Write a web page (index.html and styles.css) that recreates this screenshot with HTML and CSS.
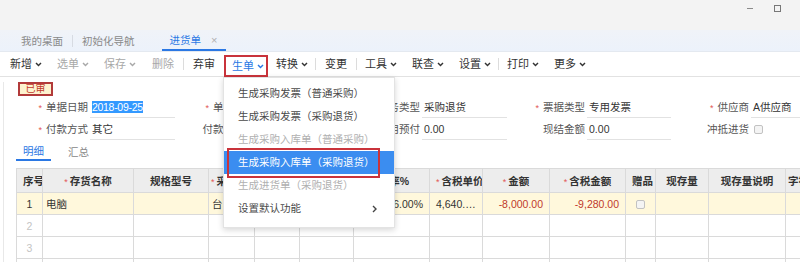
FILE: index.html
```html
<!DOCTYPE html>
<html lang="zh-CN">
<head>
<meta charset="utf-8">
<title>进货单</title>
<link rel="stylesheet" href="styles.css">
</head>
<body>
<div class="app">
  <div class="titlebar">
    <span class="win-min"></span>
    <span class="win-max"></span>
  </div>
  <div class="tabbar">
    <span class="tab">我的桌面</span>
    <span class="tabsep"></span>
    <span class="tab">初始化导航</span>
    <span class="tab active">进货单<span class="close">×</span></span>
  </div>
  <div class="toolbar">
    <span class="tb">新增<svg class="chev" viewBox="0 0 7 5"><path d="M1 1l2.5 2.6L6 1"/></svg></span>
    <span class="tb off">选单<svg class="chev" viewBox="0 0 7 5"><path d="M1 1l2.5 2.6L6 1"/></svg></span>
    <span class="tb off">保存<svg class="chev" viewBox="0 0 7 5"><path d="M1 1l2.5 2.6L6 1"/></svg></span>
    <span class="tb plain off">删除</span>
    <span class="tbsep"></span>
    <span class="tb plain">弃审</span>
    <span class="tb open">生单<svg class="chev" viewBox="0 0 7 5"><path d="M1 1l2.5 2.6L6 1"/></svg></span>
    <span class="tb">转换<svg class="chev" viewBox="0 0 7 5"><path d="M1 1l2.5 2.6L6 1"/></svg></span>
    <span class="tbsep"></span>
    <span class="tb plain">变更</span>
    <span class="tbsep"></span>
    <span class="tb">工具<svg class="chev" viewBox="0 0 7 5"><path d="M1 1l2.5 2.6L6 1"/></svg></span>
    <span class="tb">联查<svg class="chev" viewBox="0 0 7 5"><path d="M1 1l2.5 2.6L6 1"/></svg></span>
    <span class="tb">设置<svg class="chev" viewBox="0 0 7 5"><path d="M1 1l2.5 2.6L6 1"/></svg></span>
    <span class="tbsep"></span>
    <span class="tb">打印<svg class="chev" viewBox="0 0 7 5"><path d="M1 1l2.5 2.6L6 1"/></svg></span>
    <span class="tb">更多<svg class="chev" viewBox="0 0 7 5"><path d="M1 1l2.5 2.6L6 1"/></svg></span>
  </div>

  <div class="main">
    <div class="badge">已审</div>

    <div class="form">
      <div class="field"><label class="lbl"><i class="req">*</i>单据日期</label><span class="inp"><span class="sel">2018-09-25</span></span></div>
      <div class="field"><label class="lbl"><i class="req">*</i>单据编号</label><span class="inp"></span></div>
      <div class="field"><label class="lbl"><i class="req">*</i>业务类型</label><span class="inp">采购退货</span></div>
      <div class="field"><label class="lbl"><i class="req">*</i>票据类型</label><span class="inp">专用发票</span></div>
      <div class="field"><label class="lbl"><i class="req">*</i>供应商</label><span class="inp">A供应商</span></div>

      <div class="field"><label class="lbl"><i class="req">*</i>付款方式</label><span class="inp">其它</span></div>
      <div class="field"><label class="lbl">付款到期日</label><span class="inp"></span></div>
      <div class="field"><label class="lbl">使用预付</label><span class="inp">0.00</span></div>
      <div class="field"><label class="lbl">现结金额</label><span class="inp">0.00</span></div>
      <div class="field"><label class="lbl">冲抵进货</label><span class="chk chk-form"></span></div>
    </div>

    <div class="subtabs">
      <span class="subtab active">明细</span>
      <span class="subtab">汇总</span>
    </div>

    <table class="grid">
      <colgroup>
        <col class="w26"><col class="w91"><col class="w75"><col class="w46"><col class="w45"><col class="w54"><col class="w76"><col class="w53"><col class="w67"><col class="w76"><col class="w30"><col class="w53"><col class="w77"><col class="w60">
      </colgroup>
      <thead>
        <tr>
          <th>序号</th>
          <th><i class="req">*</i>存货名称</th>
          <th>规格型号</th>
          <th class="tl"><i class="req">*</i>采购单位</th>
          <th></th>
          <th></th>
          <th class="tr">税率%</th>
          <th><i class="req">*</i>含税单价</th>
          <th><i class="req">*</i>金额</th>
          <th><i class="req">*</i>含税金额</th>
          <th>赠品</th>
          <th>现存量</th>
          <th>现存量说明</th>
          <th class="tl">字符</th>
        </tr>
      </thead>
      <tbody>
        <tr class="cur">
          <td class="no">1</td>
          <td>电脑</td>
          <td></td>
          <td>台</td>
          <td></td>
          <td></td>
          <td class="num">16.00%</td>
          <td class="num">4,640.00</td>
          <td class="num red">-8,000.00</td>
          <td class="num red">-9,280.00</td>
          <td class="ctr"><span class="chk"></span></td>
          <td></td>
          <td></td>
          <td></td>
        </tr>
        <tr><td class="no dim">2</td><td></td><td></td><td></td><td></td><td></td><td></td><td></td><td></td><td></td><td></td><td></td><td></td><td></td></tr>
        <tr><td class="no dim">3</td><td></td><td></td><td></td><td></td><td></td><td></td><td></td><td></td><td></td><td></td><td></td><td></td><td></td></tr>
        <tr><td class="no dim"></td><td></td><td></td><td></td><td></td><td></td><td></td><td></td><td></td><td></td><td></td><td></td><td></td><td></td></tr>
      </tbody>
    </table>
  </div>

  <div class="menu">
    <div class="mi">生成采购发票（普通采购）</div>
    <div class="mi">生成采购发票（采购退货）</div>
    <div class="mi off">生成采购入库单（普通采购）</div>
    <div class="mi hl">生成采购入库单（采购退货）</div>
    <div class="mi off">生成进货单（采购退货）</div>
    <div class="mi sub">设置默认功能<svg class="chev-r" viewBox="0 0 5 8"><path d="M1 1l3 3-3 3"/></svg></div>
    <div class="mark"></div>
  </div>
</div>
</body>
</html>
```

FILE: styles.css
```css
* { box-sizing: border-box; }

body {
  margin: 0;
  font-family: "Liberation Sans", "Noto Sans CJK SC", sans-serif;
  font-size: 10.5px;
  color: #333;
  background: #fff;
}

.app {
  position: relative;
  width: 800px;
  height: 262px;
  overflow: hidden;
  background: #fff;
}

/* title bar */
.titlebar {
  height: 30px;
  background: #f3f3f3;
  display: flex;
  justify-content: flex-end;
  align-items: flex-start;
}
.win-min {
  width: 6px;
  height: 1px;
  background: #8a8a8a;
  margin-top: 8px;
}
.win-max {
  width: 7px;
  height: 7px;
  border: 1px solid #777;
  margin: 5px 19px 0 21px;
}

/* tab bar */
.tabbar {
  height: 22px;
  background: linear-gradient(#f0f3f8, #ecf2fb);
  display: flex;
  align-items: stretch;
  padding-left: 12px;
  border-bottom: 1px solid #e4e9f0;
}
.tab {
  display: flex;
  align-items: center;
  padding: 1px 9px 0;
  color: #8a8a8a;
  line-height: 1;
}
.tabsep {
  width: 1px;
  height: 12px;
  background: #d7dbe2;
  align-self: center;
}
.tab.active {
  margin-left: 18px;
  padding: 2px 9px 0 8px;
  color: #2b78e4;
  border-bottom: 2px solid #2b78e4;
}
.close {
  margin-left: 10px;
  color: #b0b0b0;
  font-size: 11px;
}

/* toolbar */
.toolbar {
  height: 25px;
  display: flex;
  align-items: center;
  padding-left: 2px;
  border-bottom: 1px solid #e2e2e2;
  background: #fff;
}
.tb {
  display: flex;
  align-items: center;
  height: 24px;
  padding: 0 7px 0 8px;
  font-size: 11px;
  line-height: 1;
  color: #333;
}
.tb.plain { padding: 0 9px; }
.tb.off { color: #a8a8a8; }
.tb.open {
  align-self: flex-end;
  height: 22px;
  margin-bottom: -1px;
  padding: 0 2px 0 6px;
  border: 2px solid #c9333b;
  color: #2b78e4;
}
.chev {
  width: 7px;
  height: 5px;
  margin-left: 3px;
  fill: none;
  stroke: currentColor;
  stroke-width: 1.4;
}
.tbsep {
  width: 1px;
  height: 12px;
  background: #dcdcdc;
}

/* main */
.main {
  margin-left: 3px;
  height: 186px;
  border-left: 1px solid #e8e8e8;
}

.badge {
  margin: 5px 0 0 14px;
  width: 35px;
  height: 14px;
  border: 2px solid #b23a3a;
  background: #fdf3cf;
  color: #c0392b;
  font-size: 10px;
  line-height: 10px;
  text-align: center;
}

/* form */
.form {
  margin-top: 1px;
  padding-left: 6px;
  display: grid;
  grid-template-columns: 167px 165px 166px 163px 1fr;
  grid-auto-rows: 22px;
}
.field {
  display: flex;
  align-items: flex-start;
  white-space: nowrap;
}
.lbl {
  width: 78px;
  height: 20px;
  line-height: 20px;
  text-align: right;
  color: #555;
}
.req {
  font-style: normal;
  color: #e25555;
  margin-right: 4px;
  font-size: 9px;
}
.inp {
  margin-left: 2px;
  width: 85px;
  height: 21px;
  line-height: 20px;
  padding-left: 2px;
  border-bottom: 1px solid #e2e2e2;
  color: #333;
  overflow: hidden;
}
.sel {
  display: inline-block;
  background: #3399ff;
  color: #fff;
  line-height: 12px;
  letter-spacing: -0.3px;
}
.chk {
  display: inline-block;
  width: 9px;
  height: 9px;
  border: 1px solid #c2c2c2;
  border-radius: 2px;
  background: #f4f4f4;
}
.chk-form {
  margin: 6px 0 0 5px;
}

/* sub tabs */
.subtabs {
  margin: 0 0 0 12px;
  height: 20px;
  display: flex;
  gap: 10px;
}
.subtab {
  padding: 2px 7px 0;
  height: 20px;
  display: flex;
  align-items: center;
  color: #888;
  line-height: 1;
}
.subtab.active {
  color: #2b78e4;
  border-bottom: 2px solid #2b78e4;
}

/* grid */
.grid {
  margin: 7px 0 0 12px;
  width: 829px;
  table-layout: fixed;
  border-collapse: collapse;
}
.w26 { width: 26px; }
.w91 { width: 91px; }
.w75 { width: 75px; }
.w46 { width: 46px; }
.w45 { width: 45px; }
.w54 { width: 54px; }
.w76 { width: 76px; }
.w53 { width: 53px; }
.w67 { width: 67px; }
.w77 { width: 77px; }
.w30 { width: 30px; }
.w60 { width: 60px; }

.grid th,
.grid td {
  border: 1px solid #dadada;
  padding: 0 6px;
  white-space: nowrap;
  overflow: hidden;
  text-overflow: ellipsis;
}
.grid th {
  height: 24px;
  background: #ededed;
  font-weight: bold;
  color: #333;
  text-align: center;
  text-overflow: clip;
}
.grid th.tl { text-align: left; padding-left: 2px; }
.grid th.tr { text-align: right; padding-right: 20px; }
.grid th .req { margin-right: 2px; font-weight: normal; }
.grid td {
  height: 22px;
  padding: 0 3px;
}
.grid td.num { text-align: right; padding: 0 6px; }
.grid td.red { color: #c0392b; }
.grid td.no { text-align: center; padding: 0; }
.grid td.dim { color: #c4c4c4; }
.grid td.ctr { text-align: center; padding: 0; }
.grid td .chk { vertical-align: middle; }
.grid tr.cur td { background: #fff8dc; }

/* dropdown menu */
.menu {
  position: absolute;
  left: 223px;
  top: 77px;
  width: 172px;
  padding: 4px 0 7px;
  background: #fff;
  border: 1px solid #e3e3e3;
  box-shadow: 0 2px 6px rgba(0, 0, 0, 0.16);
}
.mi {
  height: 23px;
  line-height: 23px;
  padding: 0 17px 0 14px;
  color: #4a4a4a;
  white-space: nowrap;
}
.mi.off { color: #b0b0b0; }
.mi.hl {
  background: #3b8df0;
  color: #fff;
}
.mi.sub {
  display: flex;
  justify-content: space-between;
  align-items: center;
}
.chev-r {
  width: 5px;
  height: 8px;
  fill: none;
  stroke: #444;
  stroke-width: 1.4;
}
.mark {
  position: absolute;
  left: 3px;
  top: 70px;
  width: 153px;
  height: 30px;
  border: 2px solid #c9333b;
}
```
